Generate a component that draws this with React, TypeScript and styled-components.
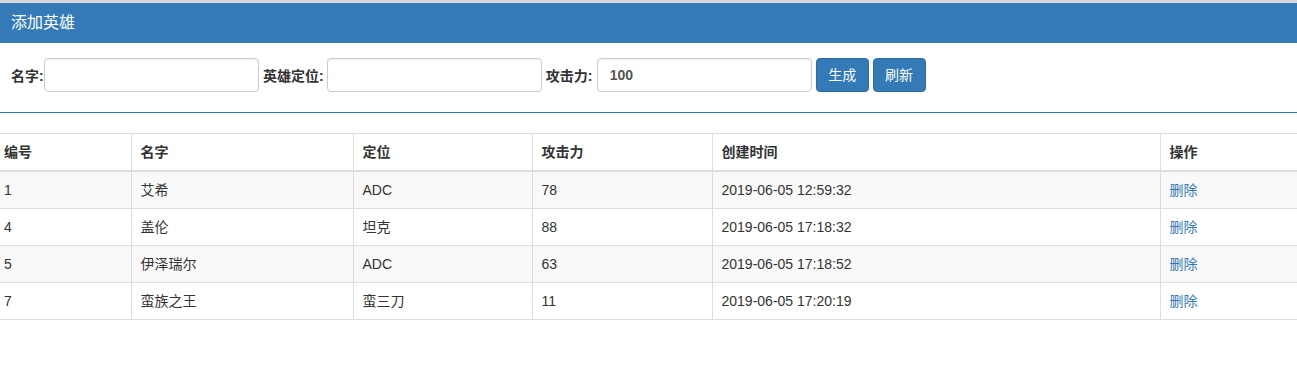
import styled, { createGlobalStyle } from "styled-components";

const GlobalStyle = createGlobalStyle`
  body {
    margin: 0;
    background: #fff;
    font-family: "Liberation Sans", "Noto Sans CJK SC", sans-serif;
    font-size: 14px;
    color: #333;
  }
`;

const heroes = [
  { id: 1, name: "艾希", role: "ADC", attack: 78, created: "2019-06-05 12:59:32" },
  { id: 4, name: "盖伦", role: "坦克", attack: 88, created: "2019-06-05 17:18:32" },
  { id: 5, name: "伊泽瑞尔", role: "ADC", attack: 63, created: "2019-06-05 17:18:52" },
  { id: 7, name: "蛮族之王", role: "蛮三刀", attack: 11, created: "2019-06-05 17:20:19" },
];

const columns = [
  { title: "编号", width: 131 },
  { title: "名字", width: 222 },
  { title: "定位", width: 179 },
  { title: "攻击力", width: 180 },
  { title: "创建时间", width: 448 },
  { title: "操作", width: 137 },
];

const App = () => {
  return (
    <>
      <GlobalStyle />
      <TopStrip />
      <Panel>
        <PanelHeading>添加英雄</PanelHeading>
        <PanelBody>
          <FormLabel $width={33}>名字:</FormLabel>
          <TextInput type="text" />{" "}
          <FormLabel $width={64}>英雄定位:</FormLabel>
          <TextInput type="text" />{" "}
          <FormLabel $width={51}>攻击力:</FormLabel>
          <TextInput type="text" defaultValue="100" />{" "}
          <Button>生成</Button> <Button>刷新</Button>
        </PanelBody>
      </Panel>
      <Table>
        <colgroup>
          {columns.map((c) => (
            <col key={c.title} style={{ width: c.width }} />
          ))}
        </colgroup>
        <thead>
          <tr>
            {columns.map((c) => (
              <HeadCell key={c.title}>{c.title}</HeadCell>
            ))}
          </tr>
        </thead>
        <tbody>
          {heroes.map((h, i) => (
            <Row key={h.id} $striped={i % 2 === 0}>
              <Cell>{h.id}</Cell>
              <Cell>{h.name}</Cell>
              <Cell>{h.role}</Cell>
              <Cell>{h.attack}</Cell>
              <Cell>{h.created}</Cell>
              <Cell>
                <DeleteLink href="#">删除</DeleteLink>
              </Cell>
            </Row>
          ))}
        </tbody>
      </Table>
    </>
  );
};

const TopStrip = styled.div`
  height: 3px;
  background: #d9d9d9;
`;

const Panel = styled.div`
  border-bottom: 1px solid #337ab7;
  margin-bottom: 20px;
`;

const PanelHeading = styled.div`
  background: #337ab7;
  color: #fff;
  font-size: 16px;
  line-height: 20px;
  height: 40px;
  box-sizing: border-box;
  padding: 10px 11px;
`;

const PanelBody = styled.div`
  padding: 15px 11px 20px;
  height: 69px;
  box-sizing: border-box;
  white-space: nowrap;
  font-size: 14px;
`;

const FormLabel = styled.label<{ $width: number }>`
  display: inline-block;
  width: ${(p) => p.$width}px;
  font-weight: bold;
  font-size: 14px;
  vertical-align: middle;
`;

const TextInput = styled.input`
  width: 215px;
  height: 34px;
  box-sizing: border-box;
  padding: 6px 12px;
  margin: 0;
  border: 1px solid #ccc;
  border-radius: 4px;
  box-shadow: inset 0 1px 1px rgba(0, 0, 0, 0.075);
  font-family: "Liberation Sans", "Noto Sans CJK SC", sans-serif;
  font-size: 14px;
  font-weight: bold;
  color: #555;
  vertical-align: middle;
  outline: none;
`;

const Button = styled.button`
  width: 53px;
  height: 34px;
  box-sizing: border-box;
  padding: 6px 0;
  margin: 0;
  border: 1px solid #2e6da4;
  border-radius: 4px;
  background: #337ab7;
  color: #fff;
  font-family: "Liberation Sans", "Noto Sans CJK SC", sans-serif;
  font-size: 14px;
  line-height: 20px;
  vertical-align: middle;
  cursor: pointer;
`;

const Table = styled.table`
  width: 1297px;
  border-collapse: collapse;
  table-layout: fixed;
  border-top: 1px solid #ddd;
`;

const HeadCell = styled.th`
  text-align: left;
  font-weight: bold;
  padding: 8px 8px 8px 9px;
  line-height: 20px;
  border-bottom: 2px solid #ddd;
  border-left: 1px solid #ddd;
  &:first-child {
    border-left: none;
    padding-left: 4px;
  }
`;

const Row = styled.tr<{ $striped: boolean }>`
  background: ${(p) => (p.$striped ? "#f9f9f9" : "#fff")};
`;

const Cell = styled.td`
  padding: 8px 8px 8px 9px;
  line-height: 20px;
  border-bottom: 1px solid #ddd;
  border-left: 1px solid #ddd;
  &:first-child {
    border-left: none;
    padding-left: 4px;
  }
`;

const DeleteLink = styled.a`
  color: #337ab7;
  text-decoration: none;
`;

export default App;
